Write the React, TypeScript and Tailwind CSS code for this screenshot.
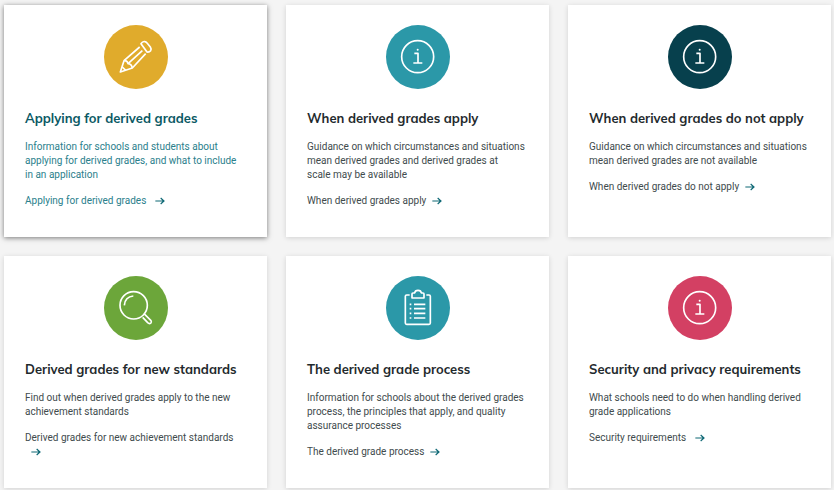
import React from 'react';
import clsx from 'clsx';

type IconName = 'pencil' | 'info' | 'search' | 'clipboard';

interface Tile {
  title: string;
  description: string;
  linkText: string;
  icon: IconName;
  circle: string;
  active?: boolean;
  wideArrow?: boolean;
}

const tiles: Tile[] = [
  {
    title: 'Applying for derived grades',
    description: 'Information for schools and students about applying for derived grades, and what to include in an application',
    linkText: 'Applying for derived grades',
    icon: 'pencil',
    circle: 'bg-[#e0ab2c]',
    active: true,
    wideArrow: true,
  },
  {
    title: 'When derived grades apply',
    description: 'Guidance on which circumstances and situations mean derived grades and derived grades at scale\u00a0may be available',
    linkText: 'When derived grades apply',
    icon: 'info',
    circle: 'bg-[#2b98a8]',
  },
  {
    title: 'When derived grades do not apply',
    description: 'Guidance on which circumstances and situations mean derived grades are not available',
    linkText: 'When derived grades do not apply',
    icon: 'info',
    circle: 'bg-[#07404d]',
  },
  {
    title: 'Derived grades for new standards',
    description: 'Find out when derived grades apply to the new achievement standards',
    linkText: 'Derived grades for new achievement standards',
    icon: 'search',
    circle: 'bg-[#6ca63a]',
  },
  {
    title: 'The derived grade process',
    description: 'Information for schools about the derived grades process, the principles that apply, and quality assurance processes',
    linkText: 'The derived grade process',
    icon: 'clipboard',
    circle: 'bg-[#2b98a8]',
  },
  {
    title: 'Security and privacy requirements',
    description: 'What schools need to do when handling derived grade applications',
    linkText: 'Security requirements',
    icon: 'info',
    circle: 'bg-[#d34063]',
    wideArrow: true,
  },
];

const icons: Record<IconName, React.ReactNode> = {
  pencil: (
    <>
      <path d="M107 66 60 107 49 141 85 129 125 86" />
      <path d="M60 107q10-1 12 9 11 1 13 13" />
      <path d="M73 115 115 77" />
      <path d="M55 126 65 136" />
      <path d="M111 56q5-8 12-6 4 1 8 6l8 10q4 6 1 11-4 5-11 4z" />
    </>
  ),
  info: (
    <>
      <circle cx="95" cy="95" r="48" />
      <circle cx="95" cy="74" r="3" fill="white" stroke="none" />
      <path d="M85 85H96V114M82 114H109" />
    </>
  ),
  search: (
    <>
      <circle cx="89" cy="88" r="41" />
      <path d="M61 88Q63 62 88 60" />
      <path d="M120 113 141 134q3 5-1 8-5 2-9-2L116 124" />
    </>
  ),
  clipboard: (
    <>
      <path d="M71 57H62q-4 0-4 4V141q0 4 4 4H129q4 0 4-4V61q0-4-4-4H121" />
      <path d="M78 66H114V54q0-3-3-3H106q-1-8-10-8t-10 8H81q-3 0-3 3z" />
      <path d="M84 85H118M84 98H118M84 112H118M84 126H118" />
      <path d="M71 85H76M71 98H76M71 112H76M71 126H76" />
    </>
  ),
};

const ArrowIcon = ({ className }: { className?: string }) => (
  <svg className={clsx('inline-block h-2 w-[10px] text-[#0e6875]', className)} viewBox="0 0 30 24" fill="none" stroke="currentColor" strokeWidth={3.5} aria-hidden="true">
    <path d="M1 12H27M17 3 27 12 17 21" />
  </svg>
);

const TileCard = ({ tile }: { tile: Tile }) => (
  <article
    className={clsx(
      'bg-white px-[21px] pt-5 pb-[29px]',
      tile.active ? 'shadow-[0_1px_5px_rgba(0,0,0,0.5)]' : 'shadow-[0_1px_5px_rgba(0,0,0,0.14)]'
    )}
  >
    <div className={clsx('mx-auto size-16 rounded-full', tile.circle)}>
      <svg className="size-16" viewBox="0 0 192 192" fill="none" stroke="white" strokeWidth={5} strokeLinejoin="round" aria-hidden="true">
        {icons[tile.icon]}
      </svg>
    </div>
    <h2
      className={clsx(
        "mt-5 font-['Mulish','Lato',sans-serif] text-[13px] leading-[18px] font-bold",
        tile.active ? 'text-[#0a5964]' : 'text-[#1f2a2d]'
      )}
    >
      {tile.title}
    </h2>
    <p className={clsx('mt-[13px] pr-0.5', tile.active ? 'text-[#2a808c]' : 'text-[#414b4d]')}>{tile.description}</p>
    <p className="mt-3">
      <a href="#" className={tile.active ? 'text-[#2a808c]' : 'text-[#414b4d]'}>
        {tile.linkText}
        <ArrowIcon className={tile.wideArrow ? 'ml-[9px]' : 'ml-1.5'} />
      </a>
    </p>
  </article>
);

export default function App() {
  return (
    <main className="min-h-screen bg-[#f4f4f4] pt-[5px] pr-[3px] pb-0.5 pl-1 font-['Roboto',sans-serif] text-[10px] leading-[14px]">
      <div className="grid grid-cols-1 gap-[19px] sm:grid-cols-2 md:grid-cols-3">
        {tiles.map((tile) => (
          <TileCard key={tile.title} tile={tile} />
        ))}
      </div>
    </main>
  );
}
